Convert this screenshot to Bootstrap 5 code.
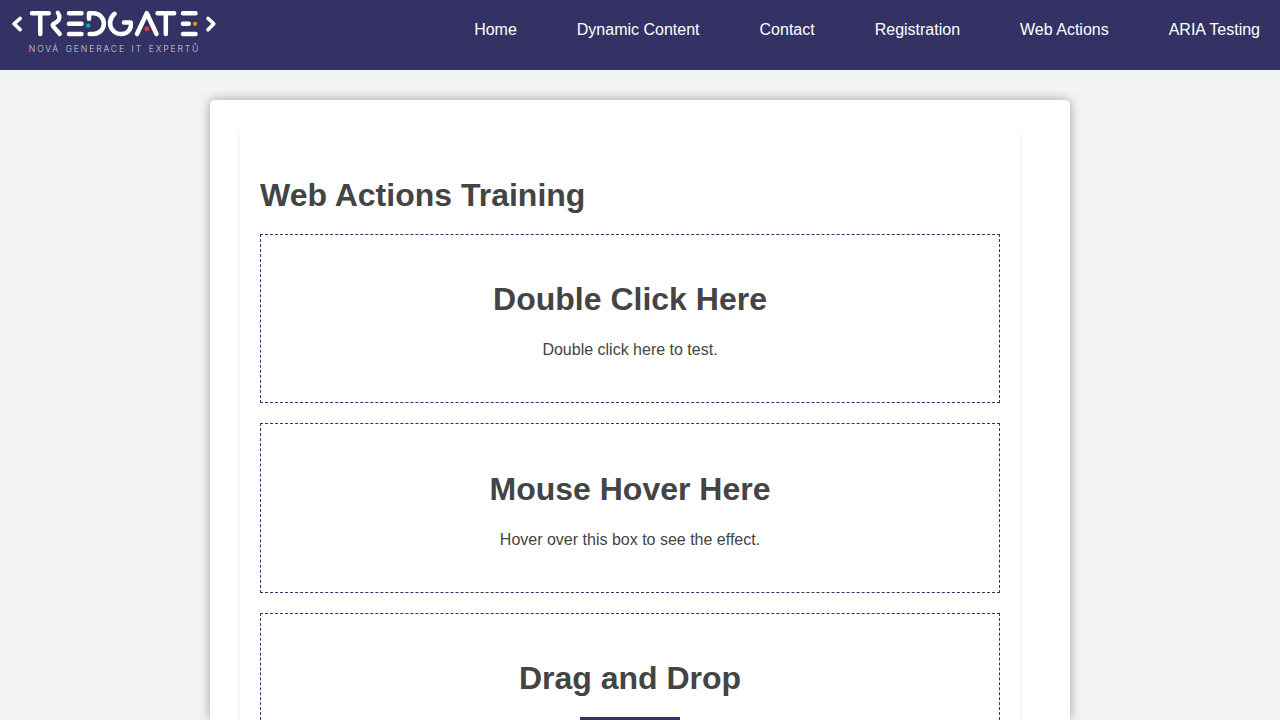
<!DOCTYPE html>
<html lang="en">
<head>
<meta charset="utf-8">
<title>Web Actions Training</title>
<link href="https://cdn.jsdelivr.net/npm/bootstrap@5.3.0/dist/css/bootstrap.min.css" rel="stylesheet">
<style>
body { font-family: "Liberation Sans", Arial, sans-serif; background: #f4f4f4; color: #444; height: 720px; overflow: hidden; font-size: 16px; }
.site-header { background: #343264; height: 70px; }
.site-menu { gap: 60px; padding: 18px 20px 0 0; }
.site-menu .nav-link { color: #fff; padding: 0; line-height: 24px; }
.page-panel { width: 860px; height: 620px; margin: 30px auto 0; padding: 30px 30px 0; background: #fff; border-radius: 5px 5px 0 0; box-shadow: 0 0 12px rgba(0,0,0,.35); }
.inner-panel { width: 780px; height: 590px; padding: 43px 20px 0; border-radius: 5px 5px 0 0; box-shadow: 0 2px 4px rgba(0,0,0,.1); }
h1, h2 { font-size: 32px; font-weight: 700; line-height: 44px; margin: 0; }
h1 { margin-bottom: 16.8px; }
.action-box { height: 169.6px; border: 1px dashed #343264; margin-bottom: 20px; padding-top: 42.2px; }
.action-box p { margin: 17px 0 0; line-height: 24px; }
.action-box.is-cut { height: 107px; margin: 0; border-bottom: 0; }
.drag-item { width: 100px; height: 3px; margin: 16.8px auto 0; background: #343264; }
.logo-tagline { font: 300 8.6px Inter, sans-serif; word-spacing: 1.5px; fill: #d2d1df; }
</style>
</head>
<body>
<header class="site-header d-flex justify-content-between align-items-start">
<svg width="230" height="70" viewBox="0 0 230 70" role="img" aria-label="Tredgate">
<g fill="none" stroke="#fff" stroke-width="4.5" stroke-linecap="round" stroke-linejoin="round">
<path d="M20.2 18.4L14 23.8l6.2 5.8" stroke-width="3.6"/>
<path d="M32 13.2h16.8M40.3 13.2V34"/>
<path d="M57.8 12.8c2.4 3.2 2 7-.6 8.8l-3.6 2.2q-1.4 1-.4 2.6L59.8 34" stroke-width="4.3"/>
<path d="M69 13.2h12.5M69 23.7h12.5M69 34h12.5"/>
<path d="M89 18.8V13.2h4.5a10.4 10.4 0 0 1 0 20.8H89.6"/>
<path d="M114.6 13.8C109 18.2 109 26 112.6 30C117 35.8 126.6 35 129.6 29.5Q131.4 26.5 130.8 22.4H124"/>
<path d="M137 34l9.8-20.8L156.5 34"/>
<path d="M157.5 13.2h16.7M165.8 13.2V34"/>
<path d="M183 13.2h12.5M183 23.7h5.8M183 34h12.5"/>
<path d="M208 18.4l5.8 5.4-5.8 6" stroke-width="3.6"/>
</g>
<circle cx="88.3" cy="25.6" r="2.2" fill="#13aaa9"/>
<circle cx="146.8" cy="28.9" r="2.4" fill="#e63935"/>
<circle cx="195" cy="23.8" r="2.1" fill="#f39c12"/>
<text class="logo-tagline" x="28.8" y="51.8" textLength="169.5">NOVÁ GENERACE IT EXPERTŮ</text>
</svg>
<nav class="nav site-menu">
<a class="nav-link" href="#">Home</a>
<a class="nav-link" href="#">Dynamic Content</a>
<a class="nav-link" href="#">Contact</a>
<a class="nav-link" href="#">Registration</a>
<a class="nav-link" href="#">Web Actions</a>
<a class="nav-link" href="#">ARIA Testing</a>
</nav>
</header>
<main class="page-panel">
<div class="inner-panel">
<h1>Web Actions Training</h1>
<section class="action-box text-center"><h2>Double Click Here</h2><p>Double click here to test.</p></section>
<section class="action-box text-center"><h2>Mouse Hover Here</h2><p>Hover over this box to see the effect.</p></section>
<section class="action-box is-cut text-center"><h2>Drag and Drop</h2><div class="drag-item"></div></section>
</div>
</main>
<script src="https://cdn.jsdelivr.net/npm/bootstrap@5.3.0/dist/js/bootstrap.bundle.min.js"></script>
</body>
</html>
